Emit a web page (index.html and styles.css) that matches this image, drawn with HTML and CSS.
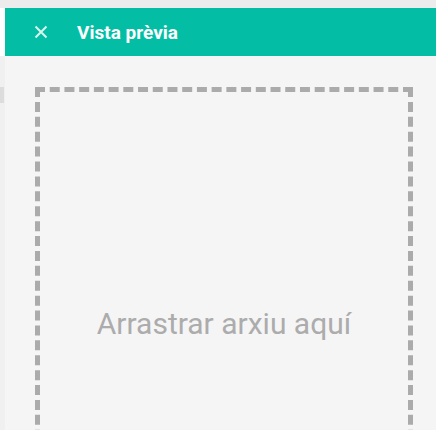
FILE: index.html
```html
<!DOCTYPE html>
<html lang="ca">
<head>
    <meta charset="UTF-8">
    <meta name="viewport" content="width=device-width, initial-scale=1.0">
    <title>Vista prèvia</title>
    <link rel="stylesheet" href="styles.css">
</head>
<body>
    <div class="top-strip"></div>
    <div class="layout">
        <div class="side">
            <div class="side-head"></div>
            <div class="side-thumb"></div>
        </div>
        <div class="panel">
            <div class="panel-header">
                <svg class="close" width="14" height="14" viewBox="0 0 14 14">
                    <path d="M1.5 1.5 L12.5 12.5 M12.5 1.5 L1.5 12.5" stroke="currentColor" stroke-width="2" fill="none"/>
                </svg>
                <span class="title">Vista prèvia</span>
            </div>
            <div class="panel-body">
                <div class="dropzone">Arrastrar arxiu aquí</div>
            </div>
        </div>
    </div>
</body>
</html>
```

FILE: styles.css
```css
html, body {
    margin: 0;
    height: 100%;
    overflow: hidden;
}
body {
    font-family: Roboto, "Liberation Sans", sans-serif;
    background-color: #f0f0f0;
}
.top-strip {
    height: 8px;
    background-color: #ececec;
}
.layout {
    display: flex;
}
.side {
    width: 5px;
    flex-shrink: 0;
    background-color: #f0f0f0;
}
.side-head {
    height: 48px;
    background-color: #fff;
}
.side-thumb {
    width: 4px;
    height: 16px;
    margin-top: 31px;
    background-color: #dcdcdc;
}
.panel {
    width: 438px;
    flex-shrink: 0;
    background-color: #f5f5f5;
}
.panel-header {
    height: 48px;
    background-color: #03bea5;
    display: flex;
    align-items: center;
    color: #fff;
}
.close {
    color: #d8f5ef;
    margin-left: 29px;
    margin-right: 29px;
}
.title {
    font-size: 19px;
    font-weight: bold;
}
.panel-body {
    padding: 31px 30px 30px;
}
.dropzone {
    height: 462px;
    border: 5px dashed #ababab;
    display: flex;
    align-items: center;
    justify-content: center;
    font-size: 30px;
    color: #acacac;
}
```
